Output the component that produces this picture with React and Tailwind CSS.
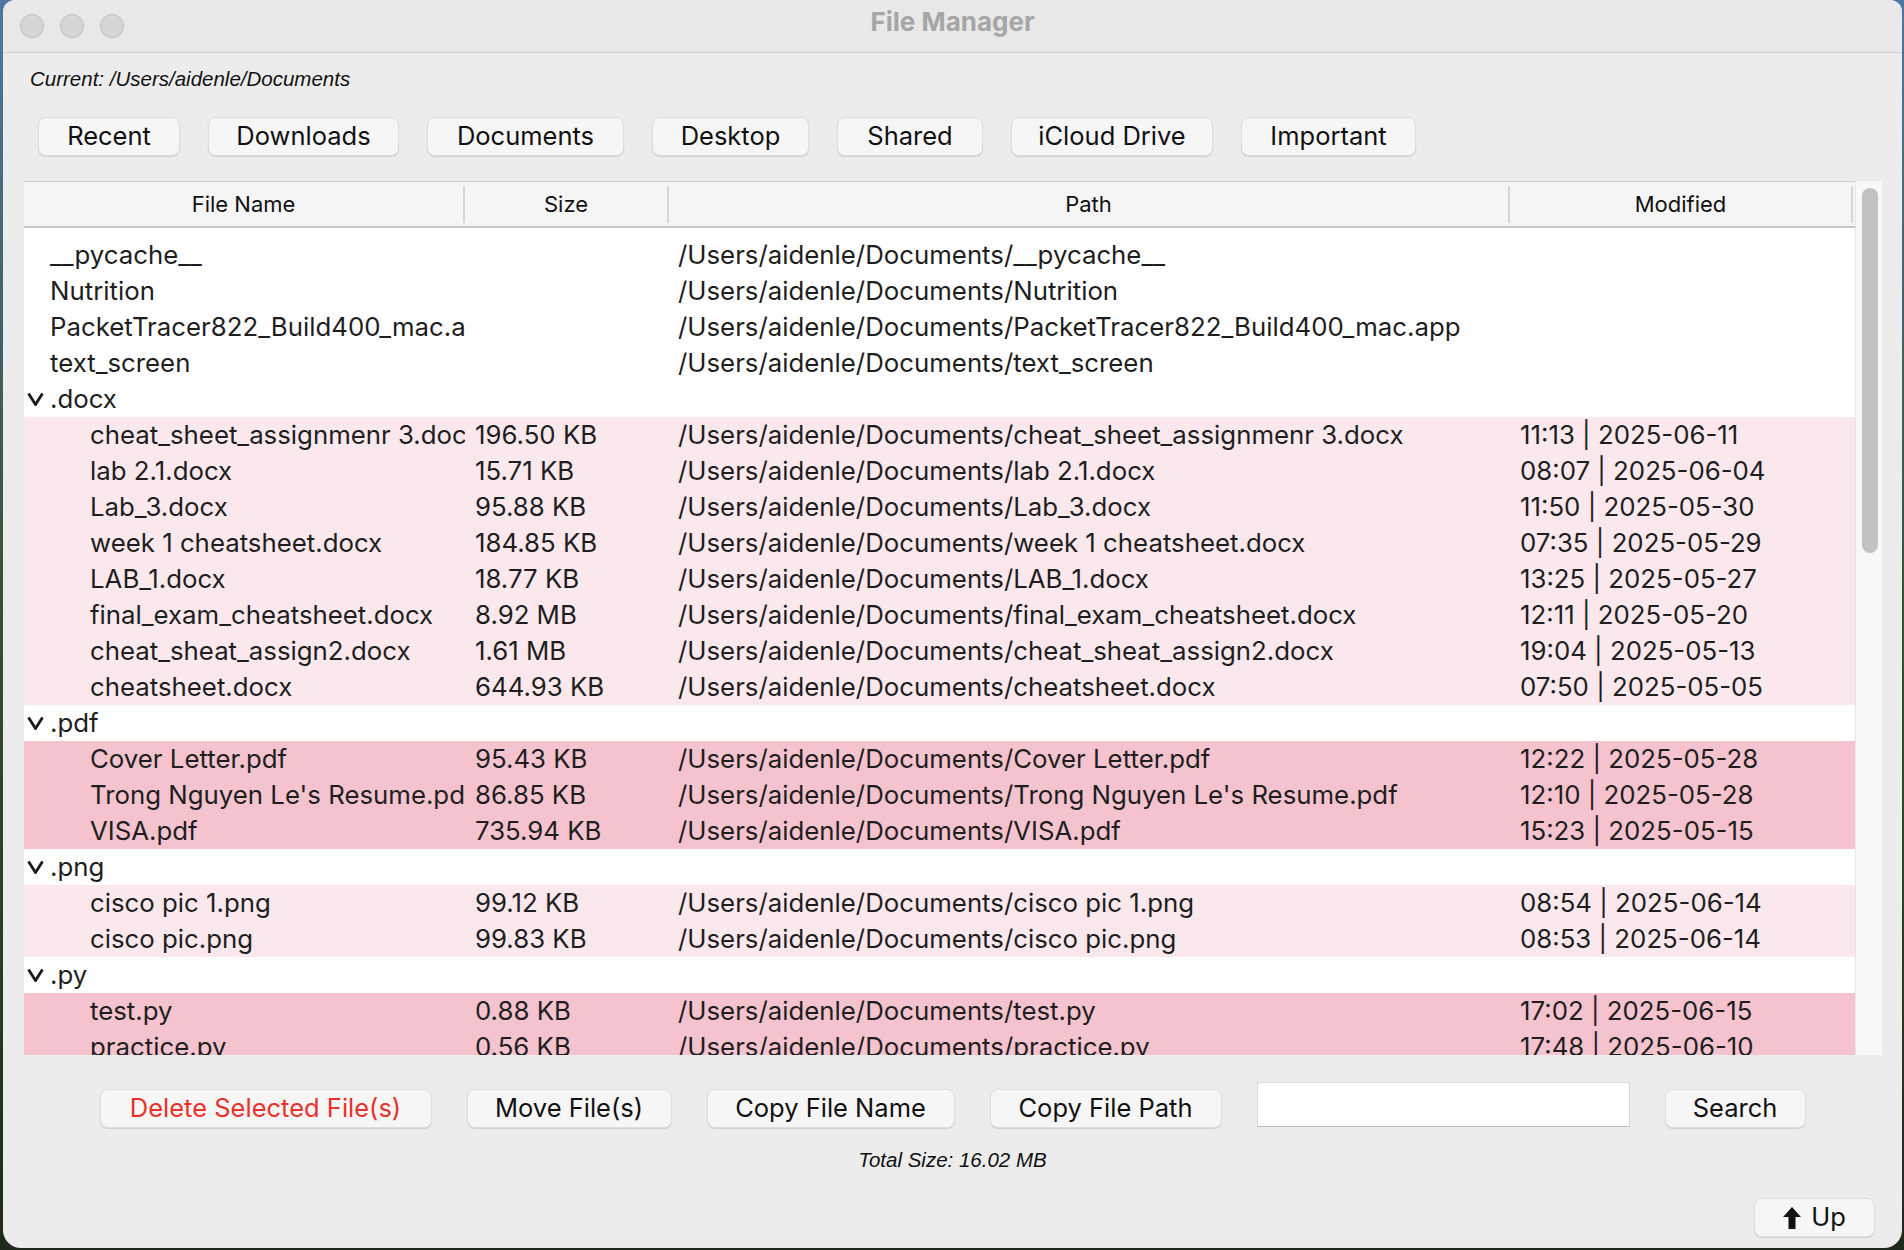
import React from "react";

const SANS = { fontFamily: "Inter, 'Noto Sans', sans-serif" };
const HELV = { fontFamily: "'Liberation Sans', Arial, sans-serif" };

const topLevel = [
  { name: "__pycache__", path: "/Users/aidenle/Documents/__pycache__" },
  { name: "Nutrition", path: "/Users/aidenle/Documents/Nutrition" },
  { name: "PacketTracer822_Build400_mac.app", path: "/Users/aidenle/Documents/PacketTracer822_Build400_mac.app" },
  { name: "text_screen", path: "/Users/aidenle/Documents/text_screen" },
];

const groups = [
  {
    ext: ".docx",
    tone: "light",
    files: [
      ["cheat_sheet_assignmenr 3.docx", "196.50 KB", "11:13 | 2025-06-11"],
      ["lab 2.1.docx", "15.71 KB", "08:07 | 2025-06-04"],
      ["Lab_3.docx", "95.88 KB", "11:50 | 2025-05-30"],
      ["week 1 cheatsheet.docx", "184.85 KB", "07:35 | 2025-05-29"],
      ["LAB_1.docx", "18.77 KB", "13:25 | 2025-05-27"],
      ["final_exam_cheatsheet.docx", "8.92 MB", "12:11 | 2025-05-20"],
      ["cheat_sheat_assign2.docx", "1.61 MB", "19:04 | 2025-05-13"],
      ["cheatsheet.docx", "644.93 KB", "07:50 | 2025-05-05"],
    ],
  },
  {
    ext: ".pdf",
    tone: "dark",
    files: [
      ["Cover Letter.pdf", "95.43 KB", "12:22 | 2025-05-28"],
      ["Trong Nguyen Le's Resume.pdf", "86.85 KB", "12:10 | 2025-05-28"],
      ["VISA.pdf", "735.94 KB", "15:23 | 2025-05-15"],
    ],
  },
  {
    ext: ".png",
    tone: "light",
    files: [
      ["cisco pic 1.png", "99.12 KB", "08:54 | 2025-06-14"],
      ["cisco pic.png", "99.83 KB", "08:53 | 2025-06-14"],
    ],
  },
  {
    ext: ".py",
    tone: "dark",
    files: [
      ["test.py", "0.88 KB", "17:02 | 2025-06-15"],
      ["practice.py", "0.56 KB", "17:48 | 2025-06-10"],
    ],
  },
];

function Chevron() {
  return (
    <svg width="17" height="14" viewBox="0 0 17 14" className="shrink-0">
      <polyline points="1.5,1.5 8.5,12.5 15.5,1.5" fill="none" stroke="#1a1a1a" strokeWidth="2.8" strokeLinejoin="miter" />
    </svg>
  );
}

function Row({ bg, name, size, path, modified, indent }) {
  return (
    <div className={`grid grid-cols-[441px_204px_841px_1fr] h-[36px] items-center whitespace-nowrap text-[#1e1e1e] ${bg}`}>
      <div className={`overflow-hidden ${indent}`}>{name}</div>
      <div className="overflow-hidden pl-[10px]">{size}</div>
      <div className="overflow-hidden pl-[9px]">{path}</div>
      <div className="overflow-hidden pl-[10px]">{modified}</div>
    </div>
  );
}

function Btn({ children, w, red }) {
  return (
    <div
      className={`${w} h-[39px] shrink-0 rounded-[8px] bg-[#f6f6f6] border border-[#dedede] shadow-[0_1px_1px_rgba(0,0,0,0.12)] flex items-center justify-center text-[25.5px] ${red ? "text-[#e8322a]" : "text-[#111111]"}`}
    >
      {children}
    </div>
  );
}

function HeadCell({ label, w }) {
  return (
    <div className={`${w} flex items-center h-full`}>
      <div className="flex-1 text-center">{label}</div>
      <div className="w-[2px] h-[37px] bg-[#d6d6d6]" />
    </div>
  );
}

export default function App() {
  return (
    <div className="w-[1904px] h-[1250px] overflow-hidden bg-gradient-to-b from-[#4f76a3] via-[#36502f] to-[#1f2a1c] flex" style={SANS}>
      <div className="ml-[3px] w-[1899px] h-[1248px] bg-[#ececec] rounded-t-[12px] rounded-b-[18px] flex flex-col overflow-hidden">
        {/* Title bar */}
        <div className="h-[53px] shrink-0 bg-[#e8e8e8] border-b border-[#d2d2d2] grid grid-cols-[1fr_auto_1fr] items-center">
          <div className="flex items-center gap-[16px] pl-[17px]">
            <div className="w-[24px] h-[24px] rounded-full bg-[#d6d6d6] border border-[#bdbdbd]" />
            <div className="w-[24px] h-[24px] rounded-full bg-[#d6d6d6] border border-[#bdbdbd]" />
            <div className="w-[24px] h-[24px] rounded-full bg-[#d6d6d6] border border-[#bdbdbd]" />
          </div>
          <div className="text-[26px] font-bold text-[#a6a6a6] -mt-[9px]">File Manager</div>
          <div />
        </div>

        {/* Current path */}
        <div className="mt-[14px] h-[24px] leading-[24px] pl-[27px] text-[20.5px] italic text-[#111111]" style={HELV}>
          Current: /Users/aidenle/Documents
        </div>

        {/* Nav buttons */}
        <div className="mt-[26px] flex gap-[28px] pl-[35px]">
          <Btn w="w-[142px]">Recent</Btn>
          <Btn w="w-[191px]">Downloads</Btn>
          <Btn w="w-[197px]">Documents</Btn>
          <Btn w="w-[157px]">Desktop</Btn>
          <Btn w="w-[146px]">Shared</Btn>
          <Btn w="w-[202px]">iCloud Drive</Btn>
          <Btn w="w-[175px]">Important</Btn>
        </div>

        {/* Table */}
        <div className="mt-[25px] ml-[21px] w-[1858px] h-[874px] flex">
          <div className="w-[1831px] flex flex-col">
            <div className="h-[47px] shrink-0 bg-[#f5f5f5] border-t border-[#cccccc] border-b-2 border-b-[#c8c8c8] flex text-[22px] text-[#111111]">
              <HeadCell label="File Name" w="w-[441px]" />
              <HeadCell label="Size" w="w-[204px]" />
              <HeadCell label="Path" w="w-[841px]" />
              <HeadCell label="Modified" w="w-[343px]" />
            </div>
            <div className="flex-1 bg-white overflow-hidden pt-[9px] text-[25.8px]">
              {topLevel.map((t) => (
                <Row key={t.name} bg="bg-white" name={t.name} size="" path={t.path} modified="" indent="pl-[26px]" />
              ))}
              {groups.map((g) => (
                <React.Fragment key={g.ext}>
                  <div className="h-[36px] flex items-center gap-[6px] pl-[3px] bg-white text-[#1e1e1e]">
                    <Chevron />
                    <span>{g.ext}</span>
                  </div>
                  {g.files.map((f) => (
                    <Row
                      key={f[0]}
                      bg={g.tone === "light" ? "bg-[#fae8ec]" : "bg-[#f4c3ce]"}
                      name={f[0]}
                      size={f[1]}
                      path={`/Users/aidenle/Documents/${f[0]}`}
                      modified={f[2]}
                      indent="pl-[66px]"
                    />
                  ))}
                </React.Fragment>
              ))}
            </div>
          </div>
          <div className="w-[27px] bg-[#f8f8f8] border-l border-[#e6e6e6] pl-[6px] pt-[7px]">
            <div className="w-[16px] h-[365px] rounded-full bg-[#c2c2c2]" />
          </div>
        </div>

        {/* Bottom actions */}
        <div className="mt-[27px] flex items-end justify-center gap-[35px]">
          <Btn w="w-[332px]" red>Delete Selected File(s)</Btn>
          <Btn w="w-[205px]">Move File(s)</Btn>
          <Btn w="w-[248px]">Copy File Name</Btn>
          <Btn w="w-[232px]">Copy File Path</Btn>
          <div className="w-[373px] h-[45px] mb-[1px] bg-white border border-[#d9d9d9] border-b-[#bdbdbd]" />
          <Btn w="w-[141px]">Search</Btn>
        </div>

        <div className="mt-[20px] h-[24px] leading-[24px] text-center text-[20.5px] italic text-[#111111]" style={HELV}>
          Total Size: 16.02 MB
        </div>

        <div className="mt-[26px] flex justify-end pr-[27px]">
          <Btn w="w-[121px]">
            <span className="flex items-center gap-[10px]">
              <svg width="18" height="22" viewBox="0 0 18 22">
                <path d="M9 0 L18 10 L12.5 10 L12.5 22 L5.5 22 L5.5 10 L0 10 Z" fill="#111111" />
              </svg>
              <span>Up</span>
            </span>
          </Btn>
        </div>
      </div>
    </div>
  );
}
